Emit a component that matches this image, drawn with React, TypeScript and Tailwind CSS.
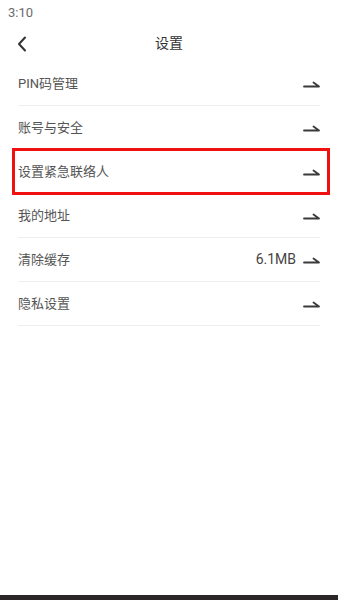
import React from 'react';

const rows = [
  { label: 'PIN码管理' },
  { label: '账号与安全' },
  { label: '设置紧急联络人', marked: true },
  { label: '我的地址' },
  { label: '清除缓存', value: '6.1MB' },
  { label: '隐私设置' },
];

const Harpoon: React.FC = () => (
  <svg width="17" height="8" viewBox="0 0 17 8" className="shrink-0">
    <path d="M1 6.5 H16 L10.5 2.5" fill="none" stroke="#3a3a3a" strokeWidth="1.8" strokeLinecap="round" strokeLinejoin="round" />
  </svg>
);

const App: React.FC = () => {
  return (
    <div
      className="flex min-h-[600px] w-[338px] flex-col bg-white text-[#555]"
      style={{ fontFamily: 'Roboto, "Noto Sans CJK SC", sans-serif' }}
    >
      <div className="flex h-[25px] items-center px-[8px] text-[13px] text-[#6b6b6b]">3:10</div>

      <div className="relative flex h-[37px] items-center justify-center">
        <svg width="10" height="16" viewBox="0 0 10 16" className="absolute left-[17px] top-[11px]">
          <path d="M8 1.5 L2 8 L8 14.5" fill="none" stroke="#333" strokeWidth="2" strokeLinecap="round" strokeLinejoin="round" />
        </svg>
        <span className="text-[14px] text-[#333]">设置</span>
      </div>

      <div className="px-[18px]">
        {rows.map((row) => (
          <div key={row.label} className="relative flex h-[44px] items-center border-b border-[#eeeeee]">
            <span className="flex-1 text-[13px]">{row.label}</span>
            {row.value && <span className="mr-[7px] text-[14px] text-[#444]">{row.value}</span>}
            <Harpoon />
            {row.marked && (
              <div className="pointer-events-none absolute -bottom-[2px] -left-[6px] -right-[10px] -top-[2px] border-[3px] border-[#f01010]" />
            )}
          </div>
        ))}
      </div>

      <div className="flex-1" />
      <div className="h-[5px] bg-[#2b2628]" />
    </div>
  );
};

export default App;
